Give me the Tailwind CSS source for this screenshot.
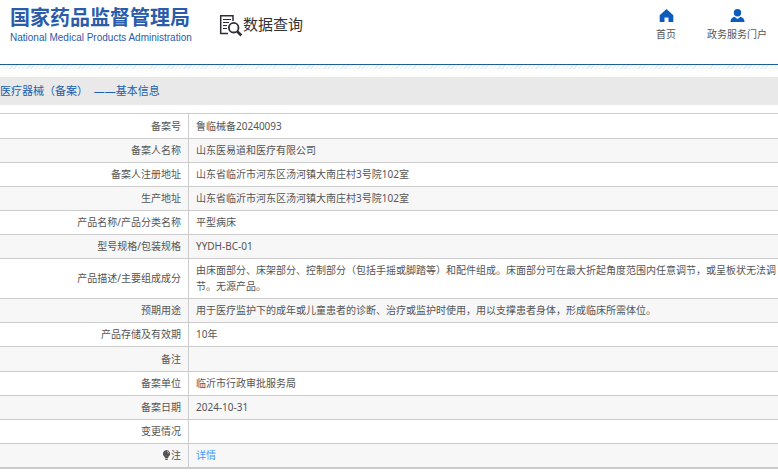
<!DOCTYPE html>
<html lang="zh-CN">
<head>
    <meta charset="UTF-8">
    <meta name="viewport" content="width=device-width, initial-scale=1.0">
    <title>数据查询 - 国家药品监督管理局</title>
    <script src="https://cdn.jsdelivr.net/npm/@tailwindcss/browser@4"></script>
</head>
<body class="bg-white font-['Noto_Sans','Noto_Sans_CJK_SC',sans-serif] text-[10px] leading-4 text-[#555]">

    <header class="flex h-[65px] items-start justify-between border-b border-[#1c5c9f] pr-[11px] pl-[10px]">
        <div class="flex">
            <a href="#" class="mt-[6px] block w-[180px] text-[#2a5caa]">
                <span class="block text-[20px] leading-6 font-bold whitespace-nowrap">国家药品监督管理局</span>
                <span class="block font-['Liberation_Sans'] text-[10px] leading-4 whitespace-nowrap">National Medical Products Administration</span>
            </a>
            <div class="mt-[12px] ml-[29px] flex items-start">
                <svg class="mt-[2px] h-[23px] w-[24px]" viewBox="0 0 24 23" fill="none" stroke="#2e2e38">
                    <path d="M14 7V1.8H1.7V19.5H9" stroke-width="1.5"/>
                    <path d="M4 5.5h8M4 8.5h6M4 11.5h4M4 14.5h4" stroke-width="1.2"/>
                    <circle cx="14.7" cy="13.7" r="4.8" stroke-width="1.8"/>
                    <path d="M18.3 17.5l4 4" stroke-width="2.6"/>
                </svg>
                <h1 class="text-[15px] leading-6 whitespace-nowrap text-[#333]">数据查询</h1>
            </div>
        </div>
        <nav class="mt-2 flex gap-[31px]">
            <a href="#" class="flex flex-col items-center gap-[3px]">
                <svg class="h-[15px] w-[15px]" viewBox="0 0 15 15" fill="#0b5cbd">
                    <path d="M7.5 1L14.300 7.300V14H9.500V9.500h-4V14H.700V7.300z"/>
                </svg>
                <span>首页</span>
            </a>
            <a href="#" class="flex flex-col items-center gap-[3px]">
                <svg class="h-[15px] w-[15px]" viewBox="0 0 15 15" fill="#0b5cbd">
                    <circle cx="7.5" cy="4.7" r="3.7"/>
                    <path d="M.5 14c0-3 1.500-4.500 4-5.200L7.500 11l3-2.200c2.500.7 4 2.200 4 5.200z"/>
                </svg>
                <span>政务服务门户</span>
            </a>
        </nav>
    </header>

    <div class="h-1 bg-[repeating-linear-gradient(135deg,#dcebf5_0_1px,#fff_1px_3px)]"></div>

    <main class="mt-2">
        <h2 class="bg-[#e9e9e9] py-[6px] text-[11px] leading-4 text-[#1a5fb0]">医疗器械（备案）&nbsp; ——基本信息</h2>

        <table class="mt-2 w-full table-fixed border-separate border-spacing-0 border-t border-b border-[#ccc] [&_td]:border-b [&_td]:border-[#ccc] [&_td]:pt-[3px] [&_td]:pb-1 [&_td]:pl-[7px] [&_th]:border-r [&_th]:border-b [&_th]:border-[#ccc] [&_th]:pt-[3px] [&_th]:pr-[7px] [&_th]:pb-1 [&_th]:text-right [&_th]:font-normal">
            <colgroup>
                <col class="w-[189px]">
                <col>
            </colgroup>
            <tbody>
                <tr class="h-[25px]"><th scope="row">备案号</th><td>鲁临械备20240093</td></tr>
                <tr class="bg-[#f7f7f7]"><th scope="row">备案人名称</th><td>山东医易道和医疗有限公司</td></tr>
                <tr><th scope="row">备案人注册地址</th><td>山东省临沂市河东区汤河镇大南庄村3号院102室</td></tr>
                <tr class="bg-[#f7f7f7]"><th scope="row">生产地址</th><td>山东省临沂市河东区汤河镇大南庄村3号院102室</td></tr>
                <tr><th scope="row">产品名称/产品分类名称</th><td>平型病床</td></tr>
                <tr class="bg-[#f7f7f7]"><th scope="row">型号规格/包装规格</th><td>YYDH-BC-01</td></tr>
                <tr><th scope="row">产品描述/主要组成成分</th><td>由床面部分、床架部分、控制部分（包括手摇或脚踏等）和配件组成。床面部分可在最大折起角度范围内任意调节，或呈板状无法调节。无源产品。</td></tr>
                <tr class="bg-[#f7f7f7]"><th scope="row">预期用途</th><td>用于医疗监护下的成年或儿童患者的诊断、治疗或监护时使用，用以支撑患者身体，形成临床所需体位。</td></tr>
                <tr><th scope="row">产品存储及有效期</th><td>10年</td></tr>
                <tr class="h-[25px] bg-[#f7f7f7]"><th scope="row">备注</th><td></td></tr>
                <tr><th scope="row">备案单位</th><td>临沂市行政审批服务局</td></tr>
                <tr class="bg-[#f7f7f7]"><th scope="row">备案日期</th><td>2024-10-31</td></tr>
                <tr><th scope="row">变更情况</th><td></td></tr>
                <tr class="bg-[#f7f7f7]">
                    <th scope="row">
                        <span class="flex items-center justify-end">
                            <svg class="h-[10px] w-[9px]" viewBox="0 0 9 10">
                                <path d="M4.500 0a3.700 3.700 0 0 1 2.200 6.600L6 8H3L2.300 6.600A3.700 3.700 0 0 1 4.500 0zM3.300 8.500h2.400V10H3.300z" fill="#555"/>
                                <path d="M5 1.500q1.500.3 1.700 1.700" stroke="#ddd" stroke-width=".8" fill="none"/>
                            </svg>
                            注
                        </span>
                    </th>
                    <td><a href="#" class="text-[#3f9bf7]">详情</a></td>
                </tr>
            </tbody>
        </table>
    </main>

</body>
</html>
